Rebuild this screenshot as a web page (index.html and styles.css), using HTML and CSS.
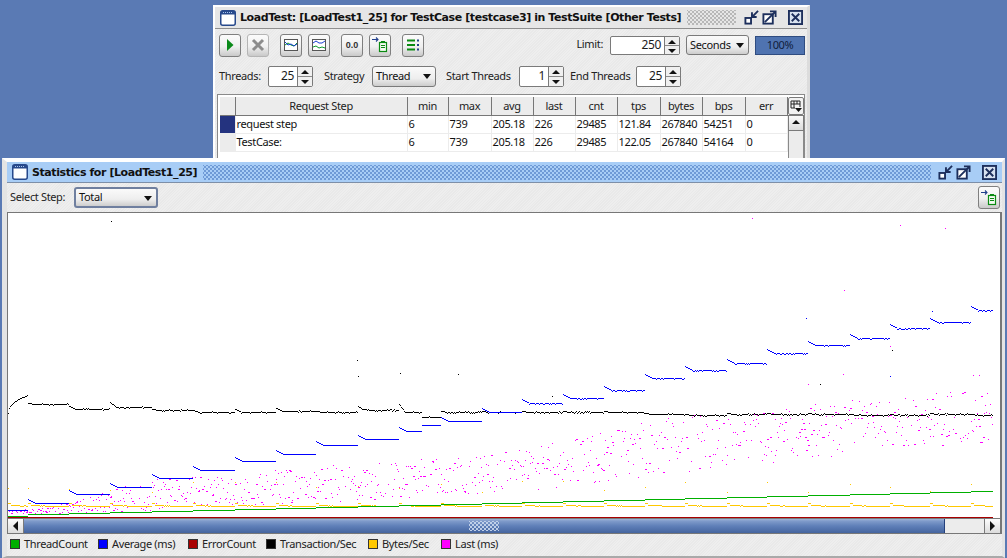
FILE: index.html
```html
<!DOCTYPE html>
<html lang="en">
<head>
  <meta charset="UTF-8" />
  <title>LoadTest Statistics</title>
  <link rel="stylesheet" href="styles.css">
</head>
<body>

<svg class="defs" width="0" height="0">
  <symbol id="i-win" viewBox="0 0 16 16">
    <rect x="0.75" y="0.75" width="14.5" height="14.5" rx="2" fill="#fff" stroke="#27498c" stroke-width="1.5"/>
    <rect x="1" y="1" width="14" height="3.5" fill="#27498c"/>
    <path d="M3 2.5h1M5 2.5h1M7 2.5h1M9 2.5h1M11 2.5h1" stroke="#a9c6ee" stroke-width="1"/>
  </symbol>
  <symbol id="i-min" viewBox="0 0 16 16">
    <rect x="1.5" y="8.5" width="6" height="6" fill="#fff" stroke="#1d2f5c" stroke-width="2"/>
    <path d="M15 1 9 7M8.5 2.5v5h5" fill="none" stroke="#1d2f5c" stroke-width="2"/>
  </symbol>
  <symbol id="i-max" viewBox="0 0 16 16">
    <rect x="1.5" y="4.5" width="10" height="10" fill="#fff" stroke="#1d2f5c" stroke-width="2"/>
    <path d="M3 13 14 2M8.5 1.5h6v6" fill="none" stroke="#1d2f5c" stroke-width="2"/>
  </symbol>
  <symbol id="i-close" viewBox="0 0 16 16">
    <rect x="1" y="1" width="14" height="14" fill="#d8e2f0" stroke="#1d2f5c" stroke-width="2"/>
    <path d="M4 4l8 8M12 4l-8 8" stroke="#1d2f5c" stroke-width="2"/>
  </symbol>
  <symbol id="i-export" viewBox="0 0 20 20">
    <path d="M2 4.500h6M6 2.500 8 4.500 6 6.500" fill="none" stroke="#22408c" stroke-width="1.100"/>
    <rect x="9.500" y="7.500" width="7" height="9" fill="#f4fbf2" stroke="#0a8a12" stroke-width="1.200"/>
    <path d="M11 6.500h4M11 10.500h4M11 12.500h4" stroke="#0a8a12" stroke-width="1"/>
  </symbol>
</svg>

<section class="win win-back">
  <header class="titlebar">
    <svg class="t-icon"><use href="#i-win"/></svg>
    <span class="t-text">LoadTest: [LoadTest1_25] for TestCase [testcase3] in TestSuite [Other Tests]</span>
    <span class="t-dots"></span>
    <svg class="t-btn"><use href="#i-min"/></svg>
    <svg class="t-btn"><use href="#i-max"/></svg>
    <svg class="t-btn t-close"><use href="#i-close"/></svg>
  </header>

  <div class="toolbar">
    <button class="tb">
      <svg width="16" height="16" viewBox="0 0 16 16"><path d="M5 2 11.500 8 5 14z" fill="#0b8a1a"/></svg>
    </button>
    <button class="tb tb-off">
      <svg width="16" height="16" viewBox="0 0 16 16"><path d="M3 3l10 10M13 3 3 13" stroke="#8c8c8c" stroke-width="3"/></svg>
    </button>
    <button class="tb">
      <svg width="16" height="16" viewBox="0 0 16 16"><rect x="1.500" y="2.500" width="13" height="11" fill="#fff" stroke="#555"/><path d="M2 8l3-2 3 2 3 1 3-3" fill="none" stroke="#0a9a2a"/><path d="M2 5l3 3 3-1 3 2 3-2" fill="none" stroke="#1a3fd0"/></svg>
    </button>
    <button class="tb tb-wide">
      <svg width="16" height="16" viewBox="0 0 16 16"><rect x="1.500" y="2.500" width="13" height="11" fill="#fff" stroke="#555"/><path d="M2 10l3-1 3 2 3-1 3 1" fill="none" stroke="#0a9a2a"/><path d="M2 6l3-2 3 2 3 0 3-2" fill="none" stroke="#1a3fd0"/></svg>
    </button>
    <button class="tb"><span class="tb-num">0.0</span></button>
    <button class="tb tb-wide">
      <svg width="20" height="20"><use href="#i-export"/></svg>
    </button>
    <button class="tb">
      <svg width="16" height="16" viewBox="0 0 16 16"><path d="M2 3.500h8M2 8h8M2 12.500h8" stroke="#0a8a12" stroke-width="2"/><path d="M12 3.500h2M12 8h2M12 12.500h2" stroke="#22408c" stroke-width="2"/></svg>
    </button>
    <span class="grow"></span>
    <span class="lbl">Limit:</span>
    <div class="spin spin-limit"><span class="spin-val">250</span><span class="spin-arrows"><i class="up"></i><i class="down"></i></span></div>
    <div class="combo combo-sec">Seconds<i class="caret"></i></div>
    <div class="progress">100%</div>
  </div>

  <div class="threadrow">
    <span class="lbl w-threads">Threads:</span>
    <div class="spin"><span class="spin-val">25</span><span class="spin-arrows"><i class="up"></i><i class="down"></i></span></div>
    <span class="lbl w-strategy">Strategy</span>
    <div class="combo combo-strategy">Thread<i class="caret"></i></div>
    <span class="lbl w-start">Start Threads</span>
    <div class="spin"><span class="spin-val">1</span><span class="spin-arrows"><i class="up"></i><i class="down"></i></span></div>
    <span class="lbl w-end">End Threads</span>
    <div class="spin"><span class="spin-val">25</span><span class="spin-arrows"><i class="up"></i><i class="down"></i></span></div>
  </div>

  <div class="tablebox">
    <div class="tablewrap">
      <table class="grid">
        <colgroup>
          <col class="c-mark"><col class="c-name"><col class="c41"><col class="c43"><col class="c42"><col class="c42"><col class="c42"><col class="c43"><col class="c42"><col class="c43"><col class="c42">
        </colgroup>
        <thead>
          <tr><th></th><th>Request Step</th><th>min</th><th>max</th><th>avg</th><th>last</th><th>cnt</th><th>tps</th><th>bytes</th><th>bps</th><th>err</th></tr>
        </thead>
        <tbody>
          <tr><td class="mark on"></td><td>request step</td><td>6</td><td>739</td><td>205.18</td><td>226</td><td>29485</td><td>121.84</td><td>267840</td><td>54251</td><td>0</td></tr>
          <tr><td class="mark"></td><td>TestCase:</td><td>6</td><td>739</td><td>205.18</td><td>226</td><td>29485</td><td>122.05</td><td>267840</td><td>54164</td><td>0</td></tr>
        </tbody>
      </table>
      <div class="vbar">
        <div class="corner"><svg width="12" height="13" viewBox="0 0 12 13"><path d="M1 1h9v6M1 1v7h4M1 4h9M4 1v7M7 1v3" fill="none" stroke="#222"/><path d="M5 8h7l-3.500 4z" fill="#111"/></svg></div>
        <div class="vbtn"><i class="up"></i></div>
        <div class="vtrack"></div>
      </div>
    </div>
  </div>
</section>

<section class="win win-front">
  <header class="titlebar titlebar-on">
    <svg class="t-icon"><use href="#i-win"/></svg>
    <span class="t-text">Statistics for [LoadTest1_25]</span>
    <span class="t-dots"></span>
    <svg class="t-btn"><use href="#i-min"/></svg>
    <svg class="t-btn"><use href="#i-max"/></svg>
    <svg class="t-btn t-close"><use href="#i-close"/></svg>
  </header>

  <div class="steprow">
    <span class="lbl w-step">Select Step:</span>
    <div class="combo combo-step">Total<i class="caret"></i></div>
    <span class="grow"></span>
    <button class="tb"><svg width="20" height="20"><use href="#i-export"/></svg></button>
  </div>

  <div class="chartbox">
    <canvas id="chart" width="993" height="305"></canvas>
    <div class="hbar">
      <div class="hbtn"><i class="tri-l"></i></div>
      <div class="hthumb"><span class="grip"></span></div>
      <div class="htrack"></div>
      <div class="hbtn hbtn-r"><i class="tri-r"></i></div>
    </div>
  </div>

  <footer class="legend">
    <span class="key"><i class="sw" style="background:#00b000"></i>ThreadCount</span>
    <span class="key"><i class="sw" style="background:#0000ff"></i>Average (ms)</span>
    <span class="key"><i class="sw" style="background:#a80000"></i>ErrorCount</span>
    <span class="key"><i class="sw" style="background:#000"></i>Transaction/Sec</span>
    <span class="key"><i class="sw" style="background:#ffc800"></i>Bytes/Sec</span>
    <span class="key"><i class="sw" style="background:#ff00ff"></i>Last (ms)</span>
  </footer>
</section>

<script src="script.js"></script>
</body>
</html>
```

FILE: styles.css
```css
* {
  box-sizing: border-box;
}

html, body {
  margin: 0;
  height: 100%;
  overflow: hidden;
}

body {
  position: relative;
  background-color: #5a7ab4;
  color: #1c1c1c;
  font-family: "Noto Sans", sans-serif;
  font-size: 11px;
  letter-spacing: -0.35px;
}

.defs {
  position: absolute;
}

i {
  display: block;
}

.grow {
  flex: 1;
}

/* windows */
.win {
  position: absolute;
  display: flex;
  flex-direction: column;
  background-color: #ececec;
  background-image: repeating-linear-gradient(135deg, #eeeeee 0 1px, #e9e9e9 1px 2px);
  border-top: 2px solid #fff;
  overflow: hidden;
}

.win-back {
  left: 213px;
  top: 5px;
  width: 597px;
  height: 153px;
  border-left: 2px solid #fff;
  border-right: 3px solid #dcdcdc;
}

.win-front {
  left: 2px;
  top: 158px;
  width: 1003px;
  height: 400px;
  border-top-width: 4px;
  border-left: 5px solid #e4e4e4;
  border-right: 3px solid #e4e4e4;
  border-bottom: 2px solid #a9a9a9;
}

.titlebar {
  display: flex;
  align-items: center;
  flex: none;
  height: 22px;
  padding: 0 4px 0 5px;
  background: #e6e6e6;
  border-bottom: 1px solid #8f8f8f;
}

.titlebar-on {
  height: 21px;
  background: #a8cdf6;
  padding: 0 5px 0 5px;
  border-bottom: 1px solid #7d8fa8;
}

.t-icon {
  width: 16px;
  height: 16px;
  flex: none;
  margin-right: 4px;
}

.t-text {
  font-family: "DejaVu Sans", sans-serif;
  font-weight: bold;
  font-size: 11px;
  letter-spacing: -0.42px;
  color: #111;
  white-space: nowrap;
}

.t-dots {
  flex: 1;
  height: 15px;
  margin: 0 5px 0 6px;
  background-image:
    radial-gradient(circle, #b4b4b4 0.7px, transparent 0.8px),
    radial-gradient(circle, #b4b4b4 0.7px, transparent 0.8px);
  background-size: 4px 4px;
  background-position: 0 0, 2px 2px;
}

.titlebar-on .t-dots {
  margin: 0 4px 0 6px;
  background-image:
    radial-gradient(circle, #6f9ad6 0.8px, transparent 0.9px),
    radial-gradient(circle, #6f9ad6 0.8px, transparent 0.9px);
}

.t-btn {
  width: 15px;
  height: 15px;
  flex: none;
  margin-left: 3px;
}

.t-close {
  margin-left: 11px;
}

/* toolbars */
.toolbar {
  display: flex;
  align-items: center;
  flex: none;
  height: 30px;
  padding: 2px 2px 0 4px;
}

.tb {
  display: flex;
  align-items: center;
  justify-content: center;
  flex: none;
  width: 22px;
  height: 23px;
  margin-right: 6px;
  padding: 0;
  border: 1px solid #7f7f7f;
  border-radius: 3px;
  background: linear-gradient(#fbfbfb, #f0f0f0 55%, #c9c9c9);
}

.tb-off {
  border-color: #b5b5b5;
  margin-right: 11px;
}

.tb-wide {
  margin-right: 11px;
}

.tb-num {
  font-size: 9px;
  font-weight: bold;
  letter-spacing: 0;
  color: #333;
}

.lbl {
  flex: none;
  white-space: nowrap;
  line-height: 14px;
  margin-top: -2px;
  color: #222;
}

.w-threads { width: 42px; }
.w-strategy { width: 38px; margin-left: 11px; }
.w-start { width: 66px; margin-left: 10px; }
.w-end { width: 59px; margin-left: 6px; }
.w-step { width: 57px; }

.spin {
  display: flex;
  flex: none;
  width: 45px;
  height: 21px;
  margin-left: 7px;
  border: 1px solid #7a7a7a;
  border-radius: 2px;
  background: #fff;
}

.spin-limit {
  width: 70px;
  height: 19px;
  margin-right: 6px;
}

.spin-val {
  flex: 1;
  padding-right: 3px;
  text-align: right;
  line-height: 18px;
  font-size: 12px;
}

.spin-limit .spin-val {
  line-height: 16px;
}

.spin-arrows {
  display: flex;
  flex-direction: column;
  width: 15px;
  border-left: 1px solid #7a7a7a;
  background: #f0f0f0;
}

.spin-arrows .up, .spin-arrows .down {
  flex: 1;
  position: relative;
}

.spin-arrows .up {
  border-bottom: 1px solid #8a8a8a;
}

.up::after, .down::after {
  content: "";
  position: absolute;
  left: 3px;
  top: 3px;
  border-left: 4px solid transparent;
  border-right: 4px solid transparent;
}

.up::after {
  border-bottom: 4px solid #111;
}

.down::after {
  border-top: 4px solid #111;
}

.combo {
  position: relative;
  flex: none;
  height: 21px;
  padding: 0 0 0 3px;
  border: 1px solid #7a7a7a;
  border-radius: 3px;
  background: linear-gradient(#fafafa, #eee 60%, #cdcdcd);
  line-height: 17px;
  font-size: 11px;
  color: #111;
}

.caret {
  position: absolute;
  right: 4px;
  top: 7px;
  border-left: 4.500px solid transparent;
  border-right: 4.500px solid transparent;
  border-top: 5px solid #111;
}

.combo-sec {
  width: 63px;
  height: 20px;
}

.combo-strategy {
  width: 64px;
  margin-left: 10px;
}

.combo-step {
  width: 84px;
  margin-left: 7px;
  border: 2px solid #6f7f9f;
  line-height: 16px;
}

.progress {
  flex: none;
  width: 50px;
  height: 19px;
  margin-left: 6px;
  border: 1px solid #2f4c80;
  background: #4f73b0;
  text-align: center;
  line-height: 16px;
  color: #10203c;
}

.threadrow {
  display: flex;
  align-items: center;
  flex: none;
  height: 21px;
  margin-top: 7px;
  padding-left: 4px;
}

/* table */
.tablebox {
  flex: 1;
  margin: 7px 2px 0 2px;
  padding: 3px 0 0 2px;
  border: 1px solid #8a8a8a;
  border-bottom: none;
  background: #fff;
}

.tablewrap {
  display: flex;
  align-items: flex-start;
  margin-top: -1px;
}

.grid {
  border-collapse: collapse;
  table-layout: fixed;
  width: 567px;
  flex: none;
}

.c-mark { width: 15px; }
.c-name { width: 172px; }
.c41 { width: 41px; }
.c42 { width: 42px; }
.c43 { width: 43px; }

.grid th {
  height: 18px;
  padding: 0;
  line-height: 14px;
  font-weight: normal;
  font-size: 11px;
  color: #222;
  background: #ececec;
  border-right: 1px solid #777;
  border-bottom: 1px solid #777;
}

.grid td {
  height: 18px;
  padding: 0 0 0 1px;
  line-height: 14px;
  font-size: 11px;
  color: #111;
  border-bottom: 1px solid #ececec;
  border-right: 1px solid #ececec;
  white-space: nowrap;
}

.grid td.mark {
  background: #ececec;
}

.grid td.mark.on {
  background: #24337f;
}

.vbar {
  width: 16px;
  flex: none;
}

.corner {
  display: flex;
  align-items: center;
  justify-content: center;
  height: 18px;
  border: 1px solid #7a7a7a;
  border-radius: 2px;
  background: #f2f2f2;
}

.vbtn {
  position: relative;
  height: 16px;
  border: 1px solid #7a7a7a;
  background: linear-gradient(#fafafa, #dcdcdc);
}

.vbtn .up::after {
  left: 3px;
  top: 4px;
}

.vtrack {
  height: 30px;
  border-left: 1px solid #8a8a8a;
  border-right: 1px solid #8a8a8a;
  background: #ececec;
}

/* statistics window */
.steprow {
  display: flex;
  align-items: center;
  flex: none;
  height: 29px;
  padding: 0 0 0 3px;
}

.steprow .tb {
  margin-right: 2px;
}

.chartbox {
  display: flex;
  flex-direction: column;
  flex: none;
  height: 322px;
  border: 1px solid #777;
  border-right: 2px solid #777;
  background: #fff;
}

#chart {
  display: block;
  flex: none;
  align-self: flex-start;
}

.hbar {
  display: flex;
  flex: none;
  height: 15px;
  border-top: 1px solid #7a7a7a;
}

.hbtn {
  display: flex;
  align-items: center;
  justify-content: center;
  flex: none;
  width: 16px;
  background: linear-gradient(#fcfcfc, #dcdcdc);
  border-right: 1px solid #7a7a7a;
}

.hbtn-r {
  border-right: none;
  border-left: 1px solid #7a7a7a;
}

.tri-l, .tri-r {
  border-top: 5px solid transparent;
  border-bottom: 5px solid transparent;
}

.tri-l {
  border-right: 5px solid #111;
}

.tri-r {
  border-left: 5px solid #111;
}

.hthumb {
  display: flex;
  justify-content: center;
  align-items: center;
  flex: none;
  width: 921px;
  background: linear-gradient(#9db4d8, #7f9aca 15%, #5f7fb8 50%, #45659f);
  border-right: 1px solid #24407c;
}

.grip {
  width: 30px;
  height: 10px;
  background-image:
    radial-gradient(circle, #c6d5ec 0.7px, transparent 0.8px),
    radial-gradient(circle, #c6d5ec 0.7px, transparent 0.8px);
  background-size: 4px 4px;
  background-position: 0 0, 2px 2px;
}

.htrack {
  flex: 1;
  background: #ececec;
}

.legend {
  display: flex;
  align-items: center;
  flex: 1;
  padding: 0 0 2px 3px;
}

.key {
  display: flex;
  align-items: center;
  white-space: nowrap;
  line-height: 14px;
  color: #222;
}

.key:nth-child(1) { width: 88px; }
.key:nth-child(2) { width: 90px; }
.key:nth-child(3) { width: 78px; }
.key:nth-child(4) { width: 102px; }
.key:nth-child(5) { width: 73px; }

.sw {
  width: 10px;
  height: 10px;
  margin-right: 4px;
  border: 1px solid #333;
}
```

FILE: script.js
```js
// step boundaries of the load test, one thread added each step
const steps = [8, 28, 69, 110, 152, 193, 235, 276, 316, 358, 399, 441, 482, 522, 563, 604, 645, 685, 727, 767, 808, 850, 890, 930, 971, 993];
const avgY = [510, 503, 494, 487, 478, 470, 461, 454, 445, 439, 431, 421, 412, 403, 398, 390, 378, 370, 363, 353, 345, 338, 328, 322, 310];
const tpsY = [404, 404, 409, 407, 410, 412, 412, 411, 412, 410, 412, 412, 412, 412, 412, 412, 414, 415, 414, 414, 414, 415, 415, 414, 415];
// how far the tps line kicks up when a thread starts
const kick = { 2: 3, 3: 5, 5: 2, 6: 3, 7: 3, 9: 4, 10: 8 };

// lower edge and height of the last (ms) cloud along the run
const cloud = [[0, 513, 3], [0.02, 513, 4], [0.06, 513, 10], [0.14, 510, 30], [0.3, 503, 36], [0.5, 493, 40], [0.67, 475, 58], [0.95, 445, 53], [1, 443, 53]];

const ox = 8, oy = 213;
const ctx = document.getElementById("chart").getContext("2d");

let seed = 4711;
function rnd() {
  seed = (seed * 16807) % 2147483647;
  return seed / 2147483647;
}

function dot(color, x, y, w, h) {
  ctx.fillStyle = color;
  ctx.fillRect(Math.round(x) - ox, Math.round(y) - oy, w || 1, h || 1);
}

function segs(fn) {
  for (let i = 0; i < steps.length - 1; i++) {
    fn(i, steps[i], steps[i + 1]);
  }
}

function cloudAt(t) {
  let k = 0;
  while (k < cloud.length - 2 && cloud[k + 1][0] < t) k++;
  const a = cloud[k], b = cloud[k + 1];
  const f = (t - a[0]) / (b[0] - a[0]);
  return [a[1] + (b[1] - a[1]) * f, a[2] + (b[2] - a[2]) * f];
}

// last (ms)
for (let x = 9; x < 993; x++) {
  if (rnd() > 0.85) continue;
  const c = cloudAt((x - 8) / 985);
  dot("#ff00ff", x, c[0] - rnd() * c[1], rnd() < 0.2 ? 2 : 1);
}

// transaction/sec
for (let x = 8; x < 28; x++) {
  const t = (x - 8) / 20;
  dot("#000", x, 413 - 18 * Math.pow(t, 0.4));
}
segs((i, a, b) => {
  if (i === 0) return;
  const up = kick[i] || 1;
  for (let x = a; x < b; x++) {
    const d = x - a;
    let y = tpsY[i];
    if (i === 10 && x >= 422) y = 417;
    if (d < 6) y -= Math.round((6 - d) * up / 6);
    else if (rnd() < 0.2) y += rnd() < 0.5 ? 1 : -1;
    dot("#000", x, y);
  }
});

// average (ms)
segs((i, a, b) => {
  for (let x = a; x < b; x++) {
    const d = x - a;
    let y = avgY[i];
    if (i === 10 && x >= 422) y = 425;
    if (i > 0 && d < 7) y -= Math.round((7 - d) * 0.5);
    if (i > 12 && d >= 7 && rnd() < 0.25) y += 1;
    dot("#0000ff", x, y);
  }
});

// bytes/sec
segs((i, a, b) => {
  for (let x = a; x < b; x++) {
    const d = x - a;
    let y = 506;
    if (d < 3) y = 503;
    else if (d < 12) y = 505;
    else if (d < 18 && rnd() < 0.5) y = 505;
    dot("#ffc800", x, y);
  }
  dot("#ffc800", a, 492 - rnd() * 12);
});

// thread count
segs((i, a, b) => {
  ctx.fillStyle = "#00b000";
  ctx.fillRect(a - ox, 515 - i - oy + (i === 0 ? 1 : 0), b - a, 1);
});
// error count stays at zero
ctx.fillStyle = "#a80000";
ctx.fillRect(0, 517 - oy, 985, 1);

// stray points far above the lines
[[111, 221], [357, 360], [358, 376], [458, 374], [400, 373], [552, 396], [892, 350], [820, 384]].forEach(p => dot("#000", p[0], p[1]));
[[900, 225], [752, 218], [945, 228], [775, 419], [843, 374], [973, 375], [979, 375], [844, 290], [890, 346], [808, 384]].forEach(p => dot("#ff00ff", p[0], p[1]));
[[890, 376], [806, 318], [932, 311], [940, 322]].forEach(p => dot("#0000ff", p[0], p[1]));
```
